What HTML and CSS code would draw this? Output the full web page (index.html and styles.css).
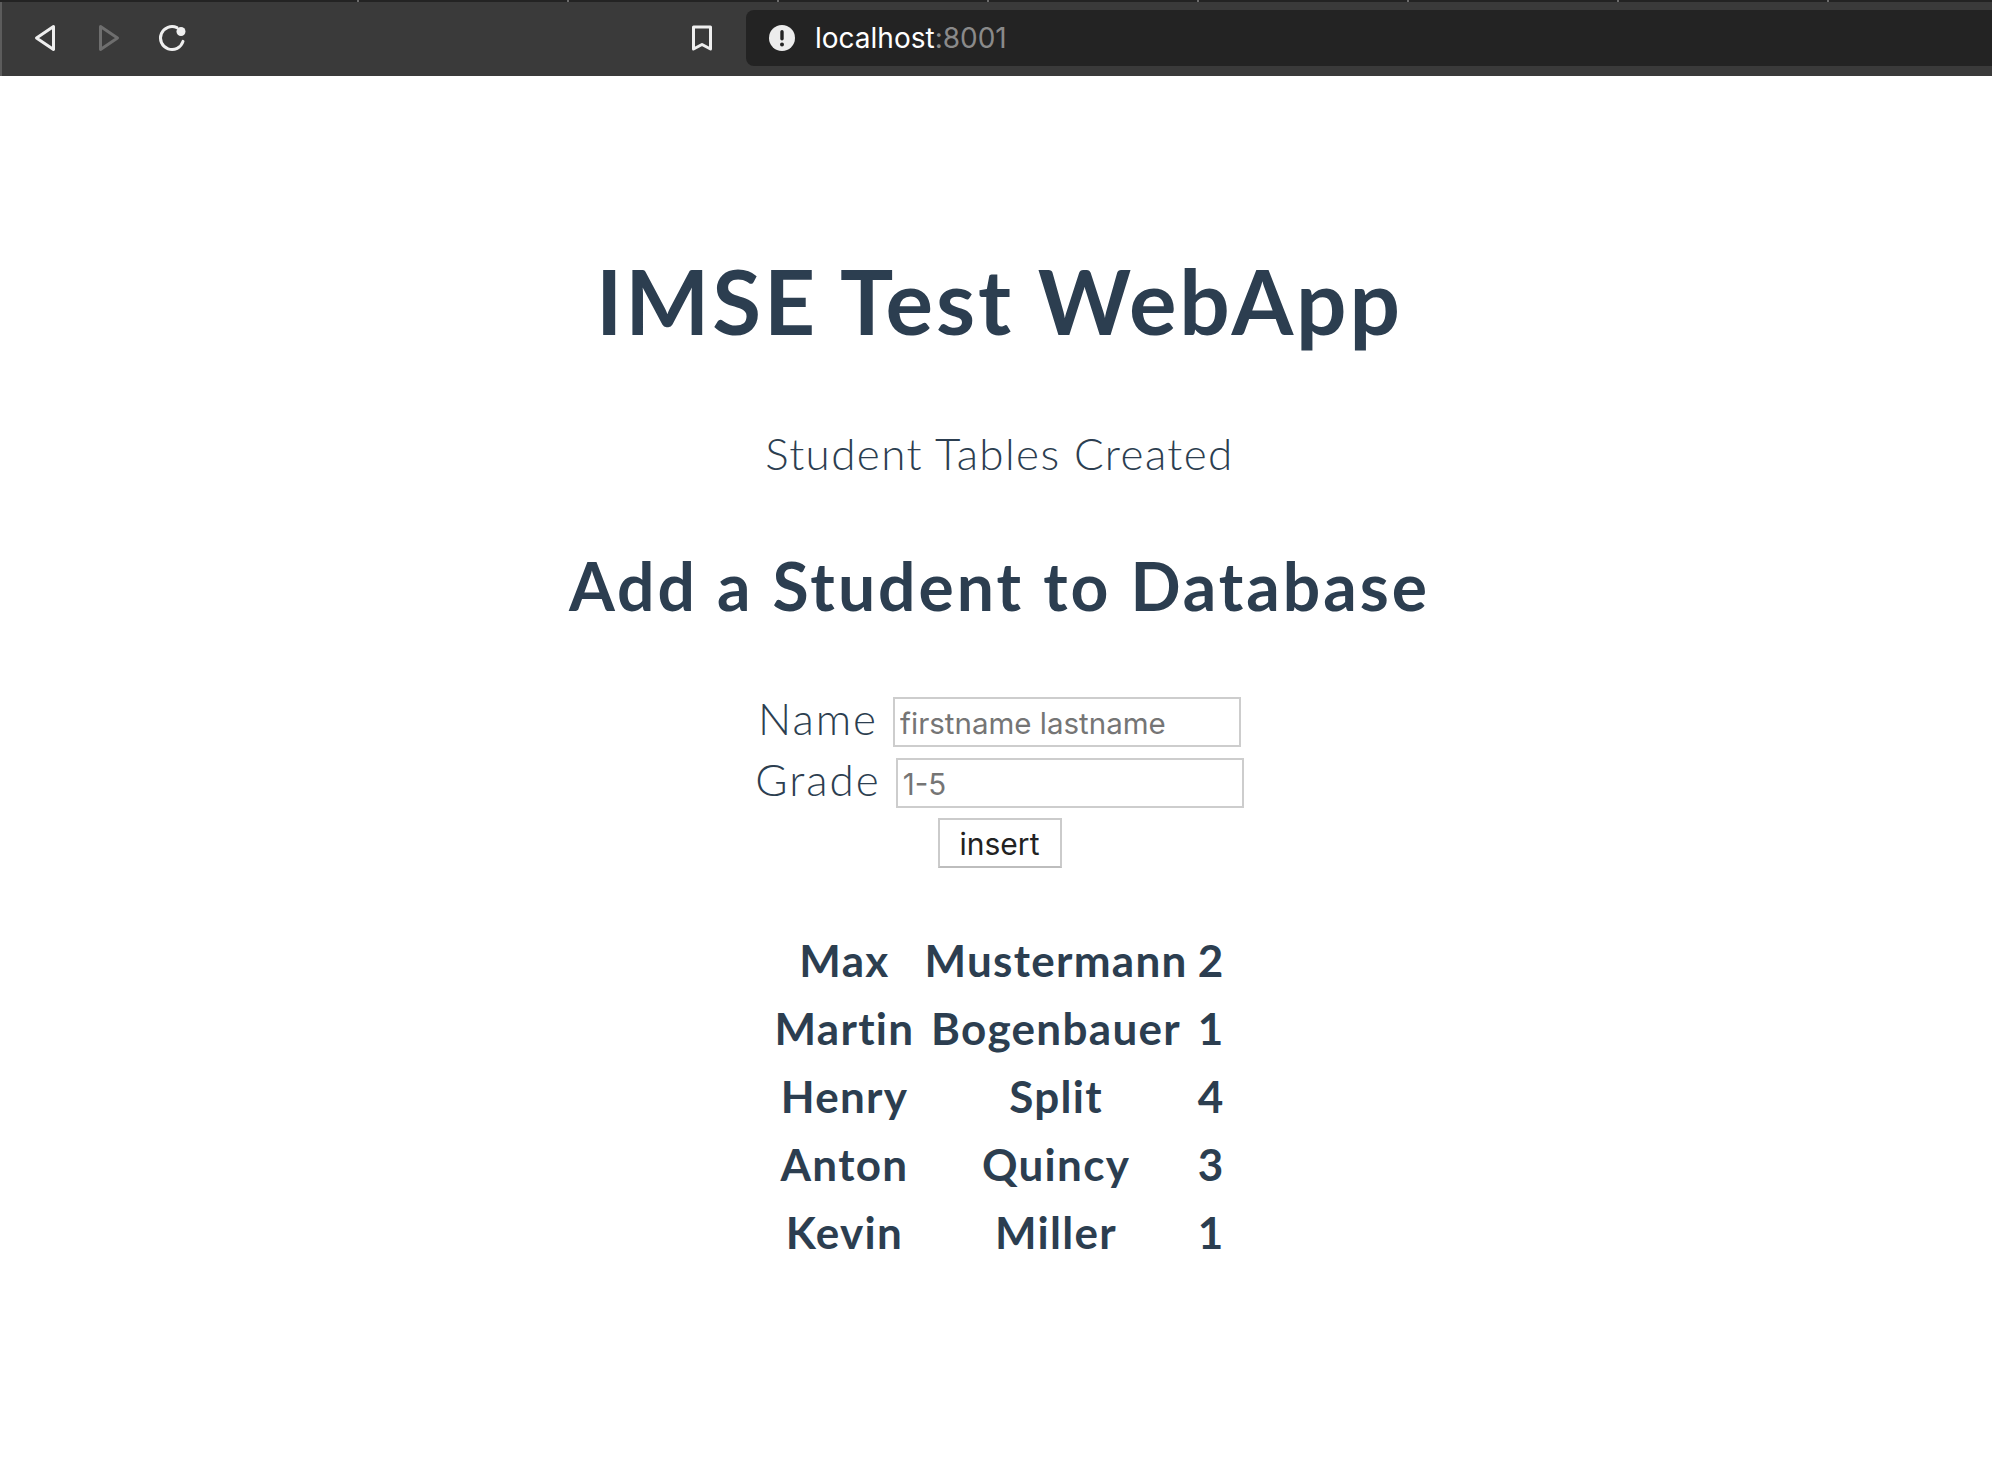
FILE: index.html
```html
<!DOCTYPE html>
<html>
<head>
    <title>IMSE Test WebApp</title>
    <link rel="stylesheet" href="styles.css">
</head>
<body>
    <!-- Browser chrome -->
    <div class="tabstrip">
        <span></span><span></span><span></span><span></span>
        <span></span><span></span><span></span><span></span>
    </div>
    <div class="toolbar">
        <svg class="nav-icon" width="24" height="30" viewBox="0 0 24 30"><path d="M20.5 3.5 L3.5 15 L20.5 26.5 Z" /></svg>
        <svg class="nav-icon nav-off" width="24" height="30" viewBox="0 0 24 30"><path d="M3.5 3.5 L20.5 15 L3.5 26.5 Z" /></svg>
        <svg class="nav-icon" width="32" height="32" viewBox="0 0 32 32">
            <path d="M21 5.7 A11.5 11.5 0 1 0 27 19.4" />
            <circle class="dot" cx="25" cy="9.5" r="4.5" />
        </svg>
        <svg class="nav-icon bookmark" width="24" height="28" viewBox="0 0 24 28"><path d="M3.5 3 H20.5 V25 L12 20.5 L3.5 25 Z" /></svg>
        <div class="address">
            <svg class="alert" width="28" height="28" viewBox="0 0 28 28">
                <circle cx="14" cy="14" r="13" fill="#ececec" />
                <rect x="12.3" y="6" width="3.4" height="10.5" rx="1.7" fill="#232323" />
                <circle cx="14" cy="20.5" r="2" fill="#232323" />
            </svg>
            <span class="host">localhost<span class="port">:8001</span></span>
        </div>
    </div>

    <div class="page">
        <h1>IMSE Test WebApp</h1>
        <p class="status">Student Tables Created</p>
        <h2>Add a Student to Database</h2>

        <form class="student-form">
            <div class="form-row">
                <label for="name">Name</label>
                <input id="name" type="text" placeholder="firstname lastname">
            </div>
            <div class="form-row">
                <label for="grade">Grade</label>
                <input id="grade" type="text" placeholder="1-5">
            </div>
            <div class="form-row">
                <button type="button">insert</button>
            </div>
        </form>

        <table class="students">
            <tr><td>Max</td><td>Mustermann</td><td>2</td></tr>
            <tr><td>Martin</td><td>Bogenbauer</td><td>1</td></tr>
            <tr><td>Henry</td><td>Split</td><td>4</td></tr>
            <tr><td>Anton</td><td>Quincy</td><td>3</td></tr>
            <tr><td>Kevin</td><td>Miller</td><td>1</td></tr>
        </table>
    </div>
</body>
</html>
```

FILE: styles.css
```css
* { box-sizing: border-box; }
body { margin: 0; background-color: white; color: #2c3e50; text-align: center; font-family: Lato, "Open Sans", sans-serif; }

.tabstrip { display: flex; height: 2px; padding-left: 149px; background-color: #232323; }
.tabstrip span { width: 210px; border-right: 2px solid #6c6c6c; }

.toolbar {
    display: flex;
    align-items: center;
    height: 74px;
    padding: 0 0 2px 31px;
    background-color: #3a3a3a;
    border-left: 2px solid #5c5c5c;
}
.nav-icon { flex: none; fill: none; stroke: #efefef; stroke-width: 3; stroke-linejoin: round; stroke-linecap: round; margin-right: 40px; }
.nav-off { stroke: #6e6e6e; margin-right: 35px; }
.dot { fill: #efefef; stroke: none; }
.bookmark { margin-left: 462px; margin-right: 32px; }
.address {
    display: flex;
    align-items: center;
    flex: 1;
    height: 56px;
    padding-left: 22px;
    background-color: #232323;
    border-radius: 8px 0 0 8px;
}
.alert { margin-right: 19px; }
.host { color: white; font-family: Inter, sans-serif; font-size: 28px; }
.port { color: #8a8a8a; }

.page { padding: 172px 0 0 7px; }
h1 { margin: 0; font-size: 89px; font-weight: 700; line-height: 106px; letter-spacing: 2.9px; }
.status { margin: 72px 0 0; font-size: 44px; font-weight: 300; line-height: 54px; letter-spacing: 1.4px; }
h2 { margin: 66px 0 0; font-size: 66px; font-weight: 700; line-height: 80px; letter-spacing: 3px; }

.student-form { margin-top: 71px; }
.form-row { display: flex; justify-content: center; align-items: center; gap: 15px; height: 50px; margin-bottom: 10.5px; }
label { padding-bottom: 8px; font-size: 44px; font-weight: 300; letter-spacing: 2px; }
input { width: 348px; height: 50px; padding: 2px 5px 0; border: 2px solid #cdcdcd; border-radius: 0; font-family: Inter, sans-serif; font-size: 29.5px; }
input::placeholder { color: #757575; }
button { width: 124px; height: 50px; padding: 2px 0 0; background-color: white; border: 2px solid #cbcbcb; border-bottom-color: #bdbdbd; color: #222; font-family: Inter, sans-serif; font-size: 30px; }

.students { margin: 58px auto 0; border-spacing: 10px 0; font-size: 44px; font-weight: 700; letter-spacing: 1.3px; }
.students td { height: 68px; padding: 0; }
```
